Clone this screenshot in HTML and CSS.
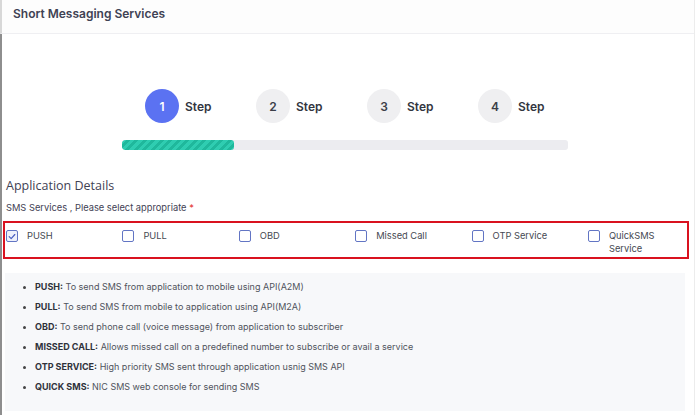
FILE: index.html
```html
<!DOCTYPE html>
<html>
<head>
<meta charset="utf-8">
<link rel="stylesheet" href="styles.css">
</head>
<body>
<div class="panel">
  <div class="panel-head">Short Messaging Services</div>
  <div class="panel-body">
    <div class="steps">
      <div class="step active"><span class="num">1</span><span class="lbl">Step</span></div>
      <div class="step"><span class="num">2</span><span class="lbl">Step</span></div>
      <div class="step"><span class="num">3</span><span class="lbl">Step</span></div>
      <div class="step"><span class="num">4</span><span class="lbl">Step</span></div>
    </div>
    <div class="progress"><div class="bar" style="width:25%"></div></div>

    <h3 class="section-title">Application Details</h3>
    <div class="field-label">SMS Services , Please select appropriate <span class="req">*</span></div>
    <div class="choices">
      <label class="choice"><span class="box checked"><svg viewBox="0 0 12 12" width="11" height="11"><path d="M2.6 6.2 L5 8.5 L9.4 3.6" fill="none" stroke="#4a5fc1" stroke-width="1.4" stroke-linecap="round" stroke-linejoin="round"/></svg></span><span class="txt">PUSH</span></label>
      <label class="choice"><span class="box"></span><span class="txt">PULL</span></label>
      <label class="choice"><span class="box"></span><span class="txt">OBD</span></label>
      <label class="choice"><span class="box"></span><span class="txt">Missed Call</span></label>
      <label class="choice"><span class="box"></span><span class="txt">OTP Service</span></label>
      <label class="choice"><span class="box"></span><span class="txt">QuickSMS Service</span></label>
    </div>

    <div class="info">
      <ul>
        <li><b>PUSH:</b> To send SMS from application to mobile using API(A2M)</li>
        <li><b>PULL:</b> To send SMS from mobile to application using API(M2A)</li>
        <li><b>OBD:</b> To send phone call (voice message) from application to subscriber</li>
        <li><b>MISSED CALL:</b> Allows missed call on a predefined number to subscribe or avail a service</li>
        <li><b>OTP SERVICE:</b> High priority SMS sent through application usnig SMS API</li>
        <li><b>QUICK SMS:</b> NIC SMS web console for sending SMS</li>
      </ul>
    </div>
  </div>
</div>
</body>
</html>
```
FILE: styles.css
```css
* { box-sizing: border-box; }
html, body { margin: 0; padding: 0; background: #fff; }
body { font-family: "Inter", "Noto Sans", sans-serif; color: #464a53; }

.panel {
  width: 695px;
  height: 415px;
  border-right: 1px solid #ececec;
  overflow: hidden;
}
.panel-head {
  height: 34px;
  padding: 6px 0 0 11px;
  font-size: 12px;
  font-weight: 600;
  color: #3f4254;
  background: #fdfdfd;
  border-left: 2px solid #d8d8d8;
  border-bottom: 1px solid #efeff2;
}
.panel-body {
  height: 381px;
  padding: 0 4px 0 1px;
  border-left: 2px solid #8e8e8e;
}

.steps {
  display: flex;
  padding: 55px 0 0 142px;
}
.step {
  width: 111px;
  display: flex;
  align-items: center;
  gap: 6px;
}
.num {
  width: 34px;
  height: 34px;
  border-radius: 50%;
  background: #efeff1;
  color: #3b3e48;
  display: flex;
  align-items: center;
  justify-content: center;
  font-size: 12px;
  font-weight: 600;
}
.step.active .num { background: #5b72f2; color: #fff; }
.lbl { font-size: 12px; font-weight: 600; color: #33363f; }

.progress {
  margin: 17px 0 0 119px;
  width: 446px;
  height: 10px;
  border-radius: 3px;
  background: #ececf0;
  overflow: hidden;
}
.bar {
  height: 100%;
  border-radius: 3px;
  background: repeating-linear-gradient(135deg, #2fcdb1 0 3px, #1fb89c 3px 6px);
}

.section-title {
  margin: 27px 0 0 3px;
  font-family: "Open Sans", sans-serif;
  font-size: 12.5px;
  font-weight: 400;
  color: #3f4254;
  line-height: 18px;
}
.field-label {
  margin: 6px 0 0 3px;
  font-size: 9.3px;
  color: #3f4254;
  line-height: 14px;
}
.req { color: #e53935; }

.choices {
  margin: 6px 0 0 0;
  width: 686px;
  border: 2px solid #d9121f;
  padding: 6px 0 2px 1px;
  display: grid;
  grid-template-columns: repeat(5, 116.4px) 1fr;
}
.choice {
  display: flex;
  align-items: flex-start;
  gap: 9px;
  font-size: 9.3px;
  color: #454952;
  line-height: 13px;
}
.box {
  flex: none;
  width: 12px;
  height: 12px;
  margin-top: 1px;
  border: 1.5px solid #6275c4;
  border-radius: 2px;
  background: #fff;
  display: flex;
  align-items: center;
  justify-content: center;
}
.box.checked { background: #eef1fb; }
.box svg { display: block; }
.txt { padding-right: 14px; }

.info {
  margin: 14px 0 0 2px;
  width: 680px;
  height: 138px;
  background: #f7f8fa;
  padding: 4px 0 0 0;
}
.info ul {
  margin: 0;
  padding: 0 0 0 30px;
  list-style: disc;
}
.info li {
  font-size: 9px;
  line-height: 20px;
  color: #4f535c;
}
.info li::marker { font-size: 8px; color: #444; }
.info b { font-weight: 700; color: #2f323a; }
```
